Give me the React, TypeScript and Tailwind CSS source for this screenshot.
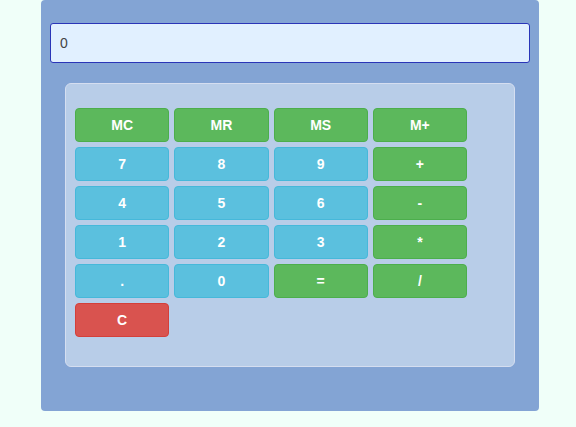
import React from "react";

const keys: { label: string; tone: "green" | "blue" | "red" }[] = [
	{ label: "MC", tone: "green" },
	{ label: "MR", tone: "green" },
	{ label: "MS", tone: "green" },
	{ label: "M+", tone: "green" },
	{ label: "7", tone: "blue" },
	{ label: "8", tone: "blue" },
	{ label: "9", tone: "blue" },
	{ label: "+", tone: "green" },
	{ label: "4", tone: "blue" },
	{ label: "5", tone: "blue" },
	{ label: "6", tone: "blue" },
	{ label: "-", tone: "green" },
	{ label: "1", tone: "blue" },
	{ label: "2", tone: "blue" },
	{ label: "3", tone: "blue" },
	{ label: "*", tone: "green" },
	{ label: ".", tone: "blue" },
	{ label: "0", tone: "blue" },
	{ label: "=", tone: "green" },
	{ label: "/", tone: "green" },
	{ label: "C", tone: "red" },
];

const toneClass = {
	green: "bg-[#5cb85c] border-[#4cae4c]",
	blue: "bg-[#5bc0de] border-[#46b8da]",
	red: "bg-[#d9534f] border-[#d43f3a]",
};

export default function App() {
	return (
		<div className="min-h-[427px] bg-[#f0fff9] font-['Liberation_Sans',Arial,sans-serif]">
			<div className="ml-[41px] w-[498px] h-[411px] rounded-[4px] bg-[#83a4d4] px-[9px] pt-[23px]">
				<input
					readOnly
					value="0"
					className="block h-[40px] w-[480px] rounded-[3px] border border-[#2a35b8] bg-[#e1f0ff] px-[9px] text-[14px] text-[#444] outline-none"
				/>
				<div className="ml-[15px] mt-[20px] h-[284px] w-[450px] rounded-[6px] border border-[#d5def0] bg-[#b8cde8] pl-[9px] pt-[24px]">
					<div className="grid w-[392px] grid-cols-4 gap-x-[5px] gap-y-[5px]">
						{keys.map((k) => (
							<button
								key={k.label}
								className={`h-[34px] rounded-[4px] border text-[14px] font-bold text-white ${toneClass[k.tone]}`}
							>
								{k.label}
							</button>
						))}
					</div>
				</div>
			</div>
		</div>
	);
}
